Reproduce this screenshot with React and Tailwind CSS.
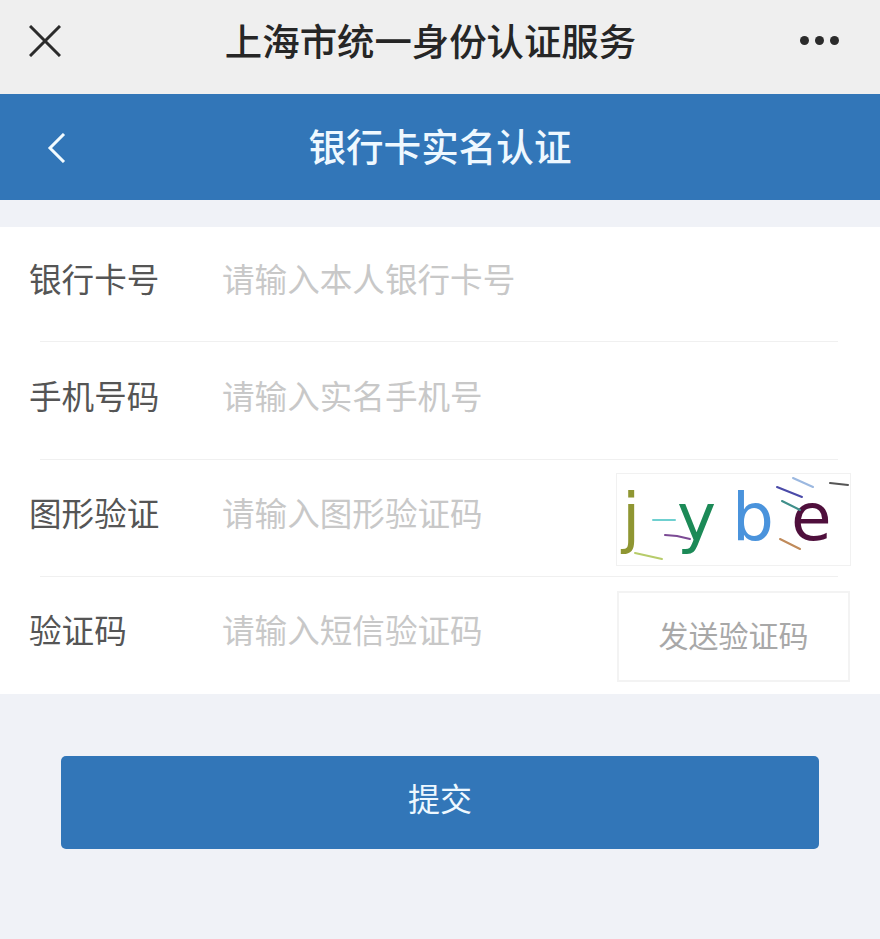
const font = { fontFamily: '"Noto Sans CJK SC", sans-serif' }

const rows = [
  { label: '银行卡号', placeholder: '请输入本人银行卡号', height: 'h-[115px]' },
  { label: '手机号码', placeholder: '请输入实名手机号', height: 'h-[118px]' },
  { label: '图形验证', placeholder: '请输入图形验证码', height: 'h-[117px]', extra: <Captcha /> },
  { label: '验证码', placeholder: '请输入短信验证码', height: 'h-[117px]', extra: <SendCode />, last: true },
]

function Captcha() {
  return (
    <svg width="233" height="91" viewBox="0 0 233 91" className="mt-[2px] block bg-white outline outline-[#f1f1f1]">
      <g fontFamily="DejaVu Sans, sans-serif" fontSize="66">
        <text x="5" y="66" fill="#8f9632">j</text>
        <text x="60" y="66" fill="#1c8a57">y</text>
        <text x="115" y="66" fill="#4a93dc">b</text>
        <text x="174" y="66" fill="#4f0f3c">e</text>
      </g>
      <g fill="none" strokeWidth="2" strokeLinecap="round">
        <path d="M36 46 H58" stroke="#6fd0d0" />
        <path d="M48 61 L60 62 L73 65" stroke="#7b4a94" />
        <path d="M18 79 L45 85" stroke="#b7cc6a" />
        <path d="M160 13 L185 23" stroke="#4a4aa8" />
        <path d="M176 4 L196 13" stroke="#9bb8e0" />
        <path d="M213 9 L231 11" stroke="#555555" />
        <path d="M165 27 L183 36" stroke="#3f8f8a" />
        <path d="M163 65 L183 75" stroke="#c08a5a" />
      </g>
    </svg>
  )
}

function SendCode() {
  return (
    <div className="mt-[2px] flex h-[91px] w-[233px] items-center justify-center border-2 border-[#f3f3f3] pb-[4px] text-[30px] text-[#a8a8a8]">
      发送验证码
    </div>
  )
}

export default function App() {
  return (
    <div className="flex min-h-[939px] flex-col bg-[#f0f2f7]" style={font}>
      <header className="flex h-[94px] items-center justify-between bg-[#efefef] pr-[41px] pb-[13px] pl-[29px]">
        <svg width="32" height="32" viewBox="0 0 32 32" fill="none" stroke="#2b2b2b" strokeWidth="3">
          <path d="M1 1 L31 31 M31 1 L1 31" />
        </svg>
        <h1 className="text-[37.4px] leading-none font-medium text-[#262626]">上海市统一身份认证服务</h1>
        <div className="flex gap-[6px]">
          <span className="size-[9px] rounded-full bg-[#2b2b2b]" />
          <span className="size-[9px] rounded-full bg-[#2b2b2b]" />
          <span className="size-[9px] rounded-full bg-[#2b2b2b]" />
        </div>
      </header>

      <div className="relative flex h-[106px] items-center justify-center bg-[#3276b8] pb-[4px]">
        <svg className="absolute top-[39px] left-[47px]" width="20" height="30" viewBox="0 0 20 30" fill="none" stroke="#f2fbff" strokeWidth="3">
          <path d="M17 1 L3 15 L17 29" />
        </svg>
        <h2 className="text-[37.6px] leading-none font-medium text-[#eef8ff]">银行卡实名认证</h2>
      </div>

      <main className="mt-[27px] bg-white">
        {rows.map((row) => (
          <div key={row.label} className={`relative flex items-center pr-[30px] pl-[29px] ${row.height}`}>
            <span className="mb-[12px] w-[193px] text-[32.6px] text-[#555555]">{row.label}</span>
            <input
              placeholder={row.placeholder}
              className="mb-[12px] min-w-0 flex-1 bg-transparent text-[32.6px] outline-none placeholder:text-[#c8c8c8]"
            />
            {row.extra}
            {!row.last && <div className="absolute right-[42px] bottom-0 left-[40px] h-px bg-[#f0f0f0]" />}
          </div>
        ))}
      </main>

      <div className="mt-[62px] px-[61px]">
        <button className="flex h-[93px] w-full items-center justify-center rounded-[5px] bg-[#3276b8] pb-[12px] text-[32px] text-[#eef8ff]">
          提交
        </button>
      </div>
    </div>
  )
}
